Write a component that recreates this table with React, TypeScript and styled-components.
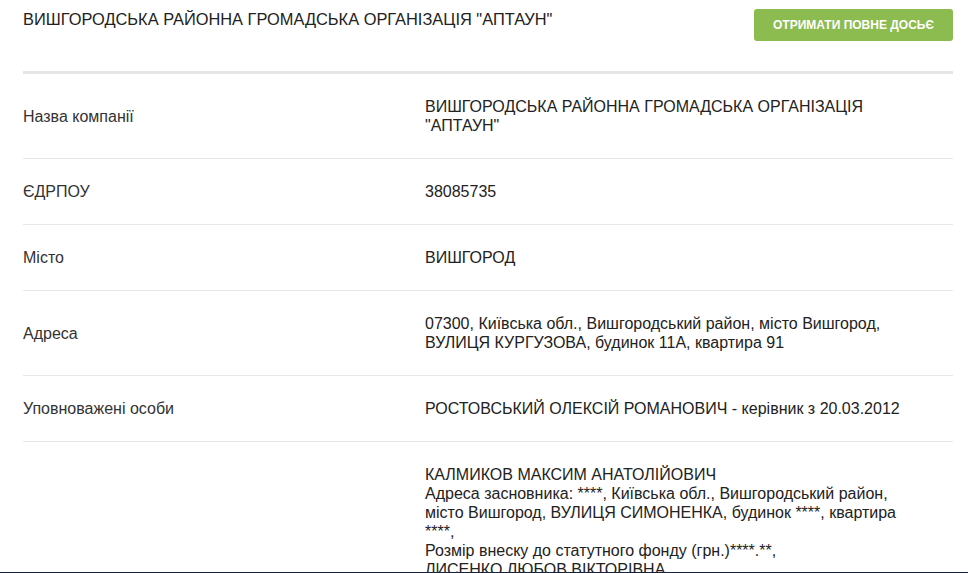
import styled, { createGlobalStyle } from "styled-components";

const GlobalStyle = createGlobalStyle`
  html, body {
    margin: 0;
    padding: 0;
    background: #fff;
  }
  body {
    font-family: "Liberation Sans", Arial, Helvetica, sans-serif;
    color: #333;
  }
`;

const Page = styled.div`
  width: 930px;
  margin-left: 23px;
`;

const Header = styled.div`
  display: flex;
  justify-content: space-between;
  align-items: flex-start;
  box-sizing: border-box;
  height: 74px;
  border-bottom: 3px solid #e6e6e6;
`;

const Title = styled.h1`
  margin: 8px 0 0;
  font-size: 16.4px;
  font-weight: normal;
  line-height: 22px;
  color: #222;
`;

const DossierButton = styled.button`
  margin-top: 9px;
  height: 32px;
  width: 199px;
  border: none;
  border-radius: 3px;
  background: #8cbb4f;
  color: #fff;
  font-family: "Liberation Sans", Arial, sans-serif;
  font-size: 12px;
  font-weight: bold;
  text-transform: uppercase;
  cursor: pointer;
`;

const Row = styled.div`
  display: grid;
  grid-template-columns: 402px 1fr;
  align-items: center;
  padding: 23px 33px 23px 0;
  border-bottom: 1px solid #e8e8e8;
  font-size: 16px;
  line-height: 19px;
`;

const Label = styled.div`
  color: #333;
`;

const Value = styled.div`
  color: #222;
`;

const BottomBar = styled.div`
  position: fixed;
  left: 0;
  right: 0;
  bottom: 0;
  height: 1px;
  background: #19243a;
`;

const rows = [
  {
    label: "Назва компанії",
    value: ['ВИШГОРОДСЬКА РАЙОННА ГРОМАДСЬКА ОРГАНІЗАЦІЯ "АПТАУН"'],
  },
  { label: "ЄДРПОУ", value: ["38085735"] },
  { label: "Місто", value: ["ВИШГОРОД"] },
  {
    label: "Адреса",
    value: [
      "07300, Київська обл., Вишгородський район, місто Вишгород, ВУЛИЦЯ КУРГУЗОВА, будинок 11А, квартира 91",
    ],
  },
  {
    label: "Уповноважені особи",
    value: ["РОСТОВСЬКИЙ ОЛЕКСІЙ РОМАНОВИЧ - керівник з 20.03.2012"],
  },
  {
    label: "",
    value: [
      "КАЛМИКОВ МАКСИМ АНАТОЛІЙОВИЧ",
      "Адреса засновника: ****, Київська обл., Вишгородський район,",
      "місто Вишгород, ВУЛИЦЯ СИМОНЕНКА, будинок ****, квартира ****,",
      "Розмір внеску до статутного фонду (грн.)****.**,",
      "ЛИСЕНКО ЛЮБОВ ВІКТОРІВНА",
      "Адреса засновника: ****, Київська обл., Вишгородський район,",
      "місто Вишгород, ВУЛИЦЯ КУРГУЗОВА, будинок ****, квартира ****,",
      "Розмір внеску до статутного фонду (грн.)****.**",
    ],
  },
];

export default function App() {
  return (
    <>
      <GlobalStyle />
      <Page>
        <Header>
          <Title>ВИШГОРОДСЬКА РАЙОННА ГРОМАДСЬКА ОРГАНІЗАЦІЯ "АПТАУН"</Title>
          <DossierButton>Отримати повне досьє</DossierButton>
        </Header>
        {rows.map((row, index) => (
          <Row key={index}>
            <Label>{row.label}</Label>
            <Value>
              {row.value.map((line, i) => (
                <div key={i}>{line}</div>
              ))}
            </Value>
          </Row>
        ))}
      </Page>
      <BottomBar />
    </>
  );
}
